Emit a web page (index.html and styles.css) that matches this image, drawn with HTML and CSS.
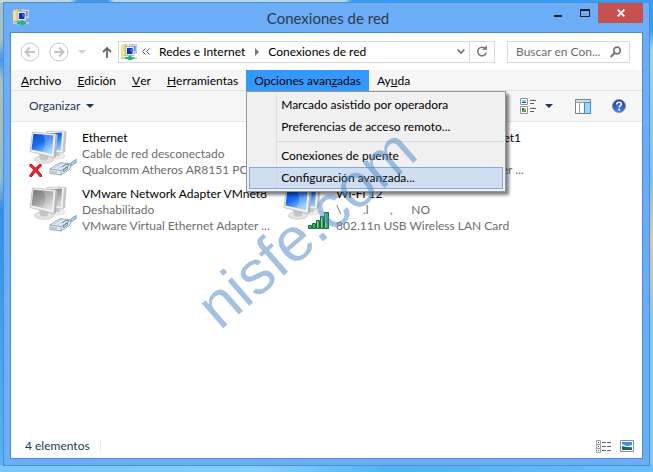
FILE: index.html
```html
<!DOCTYPE html>
<html lang="es">
<head>
<meta charset="utf-8">
<title>Conexiones de red</title>
<link rel="stylesheet" href="styles.css">
</head>
<body>
<svg class="defs" aria-hidden="true">
  <defs>
    <linearGradient id="blue" x1="0" y1="0" x2=".6" y2="1"><stop offset="0" stop-color="#0a48d0"/><stop offset=".5" stop-color="#1c6cf0"/><stop offset="1" stop-color="#8cc8ff"/></linearGradient>
    <linearGradient id="gray" x1="0" y1="0" x2=".6" y2="1"><stop offset="0" stop-color="#777"/><stop offset=".5" stop-color="#999"/><stop offset="1" stop-color="#d4d4d4"/></linearGradient>
    <linearGradient id="gold" x1="0" y1="0" x2="1" y2="0"><stop offset="0" stop-color="#fff0a8"/><stop offset="1" stop-color="#e8c458"/></linearGradient>
    <radialGradient id="help" cx=".5" cy=".8" r=".8"><stop offset="0" stop-color="#3f8cf5"/><stop offset="1" stop-color="#1638a0"/></radialGradient>
    <symbol id="netfolder" viewBox="0 0 16 16">
      <path d="M0 1.500L6 0v11.500L0 12.500z" fill="url(#gold)" stroke="#d8b860" stroke-width=".5"/>
      <path d="M8 .5h8V9l-6 1z" fill="#d8dce8" stroke="#a8b0c4" stroke-width=".7"/>
      <path d="M9.500 2h5v5.500h-4z" fill="#4c7ce8"/>
      <path d="M4.500 2.500h8.500v9H5z" fill="#eef2fa" stroke="#94a0bc" stroke-width=".7"/>
      <path d="M6 4h5.500v6H6z" fill="#1230b0"/>
      <path d="M9 5h3v2.500H9z" fill="#3868e0"/>
      <path d="M8 11.500h2V13H8z" fill="#20a860"/>
      <path d="M0 13.200h16v2H0z" fill="#c4ccd4"/>
      <path d="M4 13h9v2H4zM7 12.500h4V16H7z" fill="#28b870"/>
    </symbol>
    <symbol id="screens" viewBox="0 0 40 34">
      <ellipse cx="28" cy="26" rx="9" ry="3" fill="#ececec" stroke="#c8c8c8" stroke-width=".5"/>
      <path d="M25 19l6 1 1 6h-7z" fill="#c8c8c8"/>
      <path d="M19 1.500L36.500 1l-1.500 22-14-1z" fill="#f1f1f1" stroke="#b8b8b8" stroke-width=".7"/>
      <path d="M20 3.500L34 2.500l-1 18-12-1z" fill="var(--screen)"/>
      <path d="M36.500 1l2 .8L37 22l-2 1z" fill="#c4c4c4"/>
      <ellipse cx="16" cy="29.500" rx="9.500" ry="3.800" fill="#e4e4e4" stroke="#bdbdbd" stroke-width=".6"/>
      <path d="M11 23l9 2v4c-2 2-6 2-8 0z" fill="#c5c5c5"/>
      <path d="M4.500 2l23.500 2-2 23.500L2 21.500z" fill="#f2f2f2" stroke="#b2b2b2" stroke-width=".7"/>
      <path d="M5.500 3.800l20 1.700-1.500 18.500L3.500 19.500z" fill="var(--screen)"/>
      <path d="M15 4.700l10.500.8L24 24l-10-2.200C18 17 18 10 15 4.700z" fill="#fff" opacity=".22"/>
      <path d="M28 4l1.800.7L28 27l-2 .5z" fill="#b4b4b4"/>
    </symbol>
    <symbol id="plug" viewBox="0 0 28 17">
      <path d="M17 7C21 6 22 2.500 27.500.500L27 4C23 5 23 8 19 9.500z" fill="#a4ccf4" stroke="#5c94cc" stroke-width=".7"/>
      <path d="M1 10L11 3.500l11 1.500-1 5-9 6-11-1.500z" fill="#e4eef8" stroke="#8098b0" stroke-width=".8"/>
      <path d="M1 10l11 1.500L22 5M12 11.500V16" fill="none" stroke="#7c98b4" stroke-width=".8"/>
      <path d="M3 11.500V14M5 11.800v2.500M7 12v2.500" stroke="#a89850" stroke-width=".9"/>
      <path d="M5 9.500l8-5.500M8.500 10l8-5.500" fill="none" stroke="#9cb4cc" stroke-width=".7"/>
      <path d="M13 8l4-2.500 3 .5M14.500 12.500v-2l4-2.500v2z" fill="none" stroke="#4c6c90" stroke-width=".8"/>
    </symbol>
    <symbol id="cross" viewBox="0 0 14 14">
      <path d="M2 1.500C5 4 9 8 12.500 12.500M12 1.500C8 5 5 8.500 2 12.500" stroke="#a80c14" stroke-width="3.400" stroke-linecap="round" fill="none"/>
      <path d="M2 1.500C5 4 9 8 12.500 12.500M12 1.500C8 5 5 8.500 2 12.500" stroke="#e8262e" stroke-width="2.200" stroke-linecap="round" fill="none"/>
    </symbol>
    <symbol id="signal" viewBox="0 0 21 17">
      <path d="M.5 13.500h3v3h-3zM4.500 11.500h3v5h-3zM8.500 8.500h3v8h-3zM12.500 4.500h3v12h-3zM16.500 .5h4v16h-4z" fill="#3fa868" stroke="#16703c"/>
      <path d="M9.500 9.500v6M13.500 5.500v10M17.500 1.500v14" stroke="#90d8a8"/>
    </symbol>
  </defs>
</svg>
<main class="window">
  <header class="titlebar">
    <svg class="app-icon" aria-hidden="true"><use href="#netfolder"/></svg>
    <h1>Conexiones de red</h1>
    <div class="controls">
      <button class="ctl" aria-label="Minimizar"><svg width="10" height="14"><path d="M1 12h8v2H1z" fill="#222"/></svg></button>
      <button class="ctl" aria-label="Maximizar"><svg width="10" height="14"><path d="M0 6h10v8H0zM1 8v5h8V8z" fill="#222" fill-rule="evenodd"/></svg></button>
      <button class="ctl close" aria-label="Cerrar"><svg width="8" height="8"><path d="M.7.700l6.600 6.600M7.300.700L.7 7.300" stroke="#fff" stroke-width="1.900"/></svg></button>
    </div>
  </header>
  <div class="client">
    <div class="navbar">
      <button class="round" aria-label="Atrás"><svg width="20" height="20"><circle cx="10" cy="10" r="9" fill="none" stroke="#c9c9c9"/><path d="M15 10H6M10 5.500L5.500 10l4.500 4.500" fill="none" stroke="#c4c4c4" stroke-width="2"/></svg></button>
      <button class="round" aria-label="Adelante"><svg width="20" height="20"><circle cx="10" cy="10" r="9" fill="none" stroke="#c9c9c9"/><path d="M5 10h9M10 5.500l4.500 4.500-4.500 4.500" fill="none" stroke="#c4c4c4" stroke-width="2"/></svg></button>
      <button class="recent" aria-label="Ubicaciones recientes"><svg width="8" height="4"><path d="M0 0h8L4 4z" fill="#cfcfcf"/></svg></button>
      <button class="up" aria-label="Arriba"><svg width="10" height="12"><path d="M5 12V2M1 6l4-4 4 4" fill="none" stroke="#686868" stroke-width="1.800"/></svg></button>
      <div class="address">
        <svg class="app-icon" aria-hidden="true"><use href="#netfolder"/></svg>
        <button class="laquo" aria-label="Niveles superiores"><svg width="8" height="7"><path d="M3.500.500l-3 3 3 3M7.500.500l-3 3 3 3" fill="none" stroke="#555"/></svg></button>
        <a href="#">Redes e Internet</a>
        <svg class="sep" width="4" height="8"><path d="M0 0l4 4-4 4z" fill="#777"/></svg>
        <a href="#">Conexiones de red</a>
        <button class="drop" aria-label="Ubicaciones anteriores"><svg width="8" height="7"><path d="M.7 1.500L4 5l3.300-3.500" fill="none" stroke="#6f6f6f" stroke-width="1.800"/></svg></button>
        <button class="refresh" aria-label="Actualizar"><svg width="12" height="13"><path d="M9.500 4A4.300 4.300 0 1 0 10.200 7.500" fill="none" stroke="#777" stroke-width="1.500"/><path d="M6 4.800h5V.3z" fill="#777"/></svg></button>
      </div>
      <label class="search">
        <input type="search" placeholder="Buscar en Con..." aria-label="Buscar en Conexiones de red">
        <svg width="11" height="12"><circle cx="7" cy="4.500" r="3.300" fill="none" stroke="#777" stroke-width="1.700"/><path d="M4.500 7L.7 11" stroke="#777" stroke-width="2"/></svg>
      </label>
    </div>
    <nav class="menubar">
      <button><u>A</u>rchivo</button>
      <button><u>E</u>dición</button>
      <button><u>V</u>er</button>
      <button><u>H</u>erramientas</button>
      <div class="menu-host">
        <button class="open" aria-expanded="true">Opciones avan<u>z</u>adas</button>
        <div class="menu">
          <button>Marcado asistido por operadora</button>
          <button>Preferencias de acceso remoto...</button>
          <hr>
          <button>Conexiones de puente</button>
          <button class="hot">Configuración avanzada...</button>
        </div>
      </div>
      <button>Ay<u>u</u>da</button>
    </nav>
    <div class="toolbar">
      <button class="organize">Organizar <svg width="8" height="4"><path d="M0 0h8L4 4z" fill="#1e395b"/></svg></button>
      <button class="view" aria-label="Cambiar la vista"><svg width="16" height="16"><path d="M.5.500h7v6h-7zM.5 8.500h7v7h-7z" fill="#fff" stroke="#8a98a8"/><path d="M2 2h4v2H2z" fill="#8cc0ee"/><path d="M2 4h4v1H2z" fill="#24505c"/><path d="M2 10h4v4H2z" fill="#58b030"/><path d="M2 10h2v2H2z" fill="#2858c0"/><path d="M4 10h2v2H4z" fill="#e8c830"/><path d="M10 2.500h6M10 5.500h4M10 10.500h6M10 13.500h4" stroke="#52606e"/></svg><svg width="8" height="4"><path d="M0 0h8L4 4z" fill="#1e395b"/></svg></button>
      <button class="pane" aria-label="Panel de vista previa"><svg width="16" height="15"><path d="M.5.500h15v14H.5z" fill="#fff" stroke="#78828e"/><path d="M1 1h14v2H1z" fill="#d5dbe2"/><path d="M4.500 3v11M0 3.500h16" stroke="#98a2ae"/><path d="M9.500 3.500h6v11h-6z" fill="#9cd4fa" stroke="#3c8fd0"/></svg></button>
      <button class="help" aria-label="Ayuda"><svg width="14" height="14"><circle cx="7" cy="7" r="6.500" fill="url(#help)" stroke="#8a94a8"/><path d="M4.800 5.400c0-3 4.600-2.800 4.600-.3C9.400 6.800 7.200 6.600 7.200 8.500" fill="none" stroke="#fff" stroke-width="1.600"/><circle cx="7.200" cy="10.700" r="1" fill="#fff"/></svg></button>
    </div>
    <section class="items">
      <article class="item">
        <div class="pic"><svg class="screens"><use href="#screens"/></svg><svg class="badge cross"><use href="#cross"/></svg><svg class="badge plug"><use href="#plug"/></svg></div>
        <div class="text"><h2>Ethernet</h2><p>Cable de red desconectado</p><p>Qualcomm Atheros AR8151 PCI-E...</p></div>
      </article>
      <article class="item">
        <div class="pic off"><svg class="screens"><use href="#screens"/></svg><svg class="badge plug"><use href="#plug"/></svg></div>
        <div class="text"><h2>VMware Network Adapter VMnet1</h2><p>Deshabilitado</p><p>VMware Virtual Ethernet Adapter ...</p></div>
      </article>
      <article class="item">
        <div class="pic off"><svg class="screens"><use href="#screens"/></svg><svg class="badge plug"><use href="#plug"/></svg></div>
        <div class="text"><h2>VMware Network Adapter VMnet8</h2><p>Deshabilitado</p><p>VMware Virtual Ethernet Adapter ...</p></div>
      </article>
      <article class="item">
        <div class="pic"><svg class="screens"><use href="#screens"/></svg><svg class="badge signal"><use href="#signal"/></svg></div>
        <div class="text"><h2>Wi-Fi 12</h2><p class="spaced">\       .l       ,      NO</p><p>802.11n USB Wireless LAN Card</p></div>
      </article>
    </section>
    <footer class="status">
      <span class="count">4 elementos</span>
      <button aria-label="Detalles"><svg width="16" height="13"><path d="M.5.500h4v4h-4zM.5 4.500h4v4h-4zM.5 8.500h4v4h-4z" fill="#fff" stroke="#9aa4b0"/><path d="M2 2h1v1H2zM2 10h1v1H2z" fill="#2c62a8"/><path d="M2 6h1v1H2z" fill="#d02020"/><path d="M6 2.500h4M11 2.500h4M6 6.500h4M11 6.500h4M6 10.500h4M11 10.500h4" stroke="#5c6670"/></svg></button>
      <button aria-label="Iconos grandes"><svg width="14" height="12"><path d="M.5.500h13v11H.5z" fill="#fff" stroke="#8490a0"/><path d="M2 2h10v8H2z" fill="#3c8ee0"/><path d="M2 4l5 2 5-1v2H2z" fill="#d8f0fc"/><path d="M2 6l4 1 6 1v2H2z" fill="#246450"/></svg></button>
    </footer>
  </div>
</main>
<div class="watermark">nisfe.com</div>
</body>
</html>
```
FILE: styles.css
```css
* { box-sizing: border-box; }

body {
  margin: 0;
  min-height: 100vh;
  padding: 2px 3px 6px;
  display: flex;
  position: relative;
  overflow: hidden;
  font: 12px/16px Lato, "Open Sans", sans-serif;
  color: #000;
  background:
    radial-gradient(circle at 0 60px, #3a98f0 0, transparent 20px),
    linear-gradient(90deg, #c6dcd8 0, #b8d8e8 70px, #3a98f0 78px, #3a98f0 108px, #b4daea 114px, #b4daea 345px, #3a9cf4 352px, #3a9cf4 100%) top / 100% 3px no-repeat,
    linear-gradient(90deg, #7ac6f8, #82d0fc 40%, #4cb4f2 60%, #68bef8) bottom / 100% 7px no-repeat,
    linear-gradient(#3a9cf4 30px, #98d4e8 50px, #7cc4e4 180px, #d8c8a8 240px, #7cc8f0 330px) right / 3px 100% no-repeat,
    linear-gradient(#a4c4c8, #a8c0b8 120px, #90bcd0 180px, #2e90e8 210px, #58b4f4);
}

h1, h2, p { margin: 0; font: inherit; }
button { border: 0; padding: 0; margin: 0; background: none; font: inherit; color: inherit; display: flex; align-items: center; }
a { color: inherit; text-decoration: none; }
svg { display: block; flex: none; }
.defs { position: absolute; width: 0; height: 0; }

.window {
  flex: 1;
  min-width: 0;
  display: flex;
  flex-direction: column;
  border: 1px solid #4c8ccf;
  padding: 0 6px 6px;
  background: #6badf6;
}

.titlebar { height: 29px; display: grid; grid-template-columns: 1fr auto 1fr; align-items: center; padding-left: 3px; }
.app-icon { width: 16px; height: 16px; }
.titlebar .app-icon { align-self: start; margin-top: 6px; }
.titlebar h1 { font-size: 15px; line-height: 20px; color: #2c3a50; }
.controls { display: flex; justify-content: flex-end; align-self: start; }
.ctl { width: 27px; height: 20px; justify-content: center; align-items: flex-start; }
.ctl.close { width: 45px; align-items: center; background: #c75050; }

.client { flex: 1; display: flex; flex-direction: column; border: 1px solid #4c8ccf; background: #fff; }

.navbar { display: flex; align-items: center; height: 37px; padding: 0 12px 0 9px; }
.round { margin-right: 9px; }
.recent { margin: 0 16px 0 0; }
.up { margin-right: 6px; }
.address { flex: 1; height: 22px; display: flex; align-items: center; border: 1px solid #d9d9d9; padding-left: 2px; margin-right: 12px; }
.laquo { margin: 0 9px 0 5px; }
.sep { margin: 0 9px 0 10px; }
.drop { margin-left: auto; padding: 0 4px; }
.refresh { align-self: stretch; width: 25px; border-left: 1px solid #d9d9d9; justify-content: center; }
.search { width: 123px; height: 22px; display: flex; align-items: center; border: 1px solid #d9d9d9; padding: 0 8px; }
.search input { flex: 1; min-width: 0; border: 0; padding: 0; outline: 0; appearance: none; font: inherit; background: none; }
.search input::-webkit-search-cancel-button { display: none; }
.search input::placeholder { color: #6d6d6d; opacity: 1; }

.menubar { display: flex; height: 21px; padding-left: 2px; background: #f6f6f6; border-bottom: 1px solid #e3e3e3; }
.menubar > button, .open { height: 21px; padding: 0 8px; white-space: pre; }
.open { background: #3399ff; }
.menu-host { position: relative; }
.menu {
  position: absolute;
  z-index: 2;
  top: 21px;
  left: 0;
  width: 260px;
  padding: 2px;
  border: 1px solid #979797;
  background: linear-gradient(90deg, #e0e0e0, #e0e0e0) 29px 2px / 1px calc(100% - 4px) no-repeat #f0f0f0;
  box-shadow: 3px 3px 3px rgba(0, 0, 0, .5);
}
.menu button { width: 100%; height: 22px; padding-left: 31px; border: 1px solid transparent; }
.menu .hot { border-color: #78aee5; background: rgba(168, 200, 240, .45); }
.menu hr { margin: 3px 0 3px 28px; border: 0; border-top: 1px solid #d9d9d9; }

.toolbar { display: flex; align-items: center; height: 31px; padding: 0 16px 0 18px; background: #f6f6f6; border-bottom: 1px solid #e6e6e6; color: #1e395b; }
.organize { gap: 6px; }
.view { gap: 9px; margin-left: auto; }
.pane { margin: 0 21px 0 22px; }

.items { flex: 1; display: grid; grid-template-columns: 254px 254px; grid-auto-rows: 48px; align-content: start; row-gap: 8px; padding: 8px 0 0 17px; }
.item { display: flex; min-width: 0; padding-right: 14px; }
.pic { --screen: url(#blue); position: relative; width: 54px; flex: none; }
.pic.off { --screen: url(#gray); }
.screens { width: 40px; height: 34px; }
.badge { position: absolute; }
.cross { left: 1px; top: 34px; width: 13px; height: 13px; }
.plug { left: 21px; top: 29px; width: 28px; height: 17px; }
.signal { left: 26px; top: 26px; width: 21px; height: 17px; }
.text { min-width: 0; }
.text h2, .text p { white-space: nowrap; }
.text p { color: #6d6d6d; }
.text .spaced { white-space: pre; }

.status { display: flex; align-items: center; height: 24px; padding: 0 8px 0 14px; gap: 8px; color: #1e395b; }
.count { padding-right: 10px; margin-right: auto; line-height: 12px; border-right: 1px solid #ececec; }

.watermark {
  position: absolute;
  z-index: 3;
  left: 220px;
  top: 275px;
  font: 62px/70px "Liberation Sans", Arial, sans-serif;
  color: rgba(75, 131, 196, .5);
  transform: rotate(-41deg);
  transform-origin: 0 56px;
  pointer-events: none;
}
```
